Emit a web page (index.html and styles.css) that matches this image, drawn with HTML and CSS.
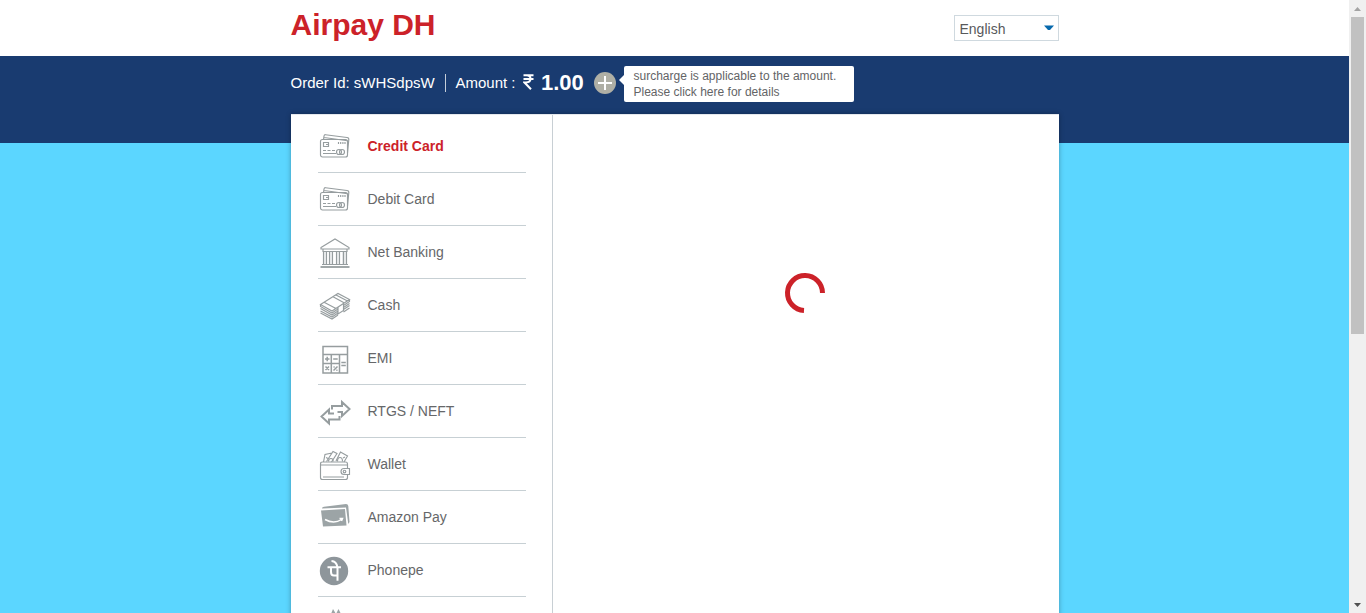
FILE: index.html
```html
<!DOCTYPE html>
<html lang="en">
<head>
<meta charset="utf-8">
<title>Airpay DH</title>
<link rel="stylesheet" href="styles.css">
</head>
<body>
<svg width="0" height="0" class="defs">
  <symbol id="cards" viewBox="0 0 32 32">
    <path d="M4.500 8.500L5 5Q5.300 3.600 6.500 3.700L28 6.500Q30 6.800 29.800 8.500L28.500 22M5 6.500L28.500 9.700"/>
    <rect x="1.500" y="8.500" width="27" height="17.500" rx="2"/>
    <path d="M4.500 11.500h5v4h-5zM7 13.500h2.500M19.500 11v2M21.700 11v2M23.900 11v2M26 11v2M4 19.500h3M8.500 19.500h3M13 19.500h3M4 22.500h13"/>
    <circle cx="20" cy="21" r="2.500"/><circle cx="23" cy="21" r="2.500"/>
  </symbol>
</svg>
<div class="window">
  <div class="page">
    <header class="top">
      <h1 class="brand">Airpay DH</h1>
      <div class="language">English<svg class="caret" width="10" height="6" viewBox="0 0 10 6"><path d="M0 0.500h10L6 5H4z"/></svg></div>
    </header>
    <main class="main">
      <div class="order">
        <span class="order-id">Order Id: sWHSdpsW</span>
        <span class="amount-label">Amount :</span>
        <svg class="rupee" width="11" height="16" viewBox="0 0 11 16"><path d="M0.500 1.200h10M0.500 5h10M1.500 1.200h2Q7.500 1.200 7.500 4.700T3 8.500H1.500L8 15.200"/></svg>
        <strong class="amount">1.00</strong>
        <svg class="plus" width="22" height="22" viewBox="0 0 22 22"><circle cx="11" cy="11" r="11"/><path d="M11 4v14M4 11h14"/></svg>
        <div class="tip">surcharge is applicable to the amount.<br>Please click here for details</div>
      </div>
      <section class="panel">
        <nav class="methods">
          <a class="method active"><svg class="icon"><use href="#cards"/></svg>Credit Card</a>
          <a class="method"><svg class="icon"><use href="#cards"/></svg>Debit Card</a>
          <a class="method"><svg class="icon" viewBox="0 0 32 32"><path class="soft" d="M4 14h4v13H4zM10 14h4v13h-4zM17 14h4v13h-4zM23 14h4v13h-4z"/><path d="M2 10.500L16 2L30 10.500v1.500H2zM4 12v2.500h24v-2.500M4.500 15v12M7.500 15v12M10.500 15v12M13.500 15v12M17.500 15v12M20.500 15v12M24.500 15v12M27.500 15v12M3 27.500h26"/><path class="base" d="M1.500 30h29"/></svg>Net Banking</a>
          <a class="method"><svg class="icon" viewBox="0 0 32 32"><path d="M1.500 14.500L19 3.500L30.500 9.500L13 21zM5.500 12.500L17 18.500M14 6.800L25.500 13M17 5L28.500 11M1.500 14.500v2L13 23l6-4M1.500 18.500L13 25l6-4M1.500 21L13 27l6-4M1.500 23L13 29l6-4M30.500 9.500v2L24.500 15.500M30.500 13.500L24.500 17.500M30.500 15.500L24.500 19.500M30.500 18L24.500 22M19 17.500v6.500L24.500 20.500v-7.500"/></svg>Cash</a>
          <a class="method"><svg class="icon thick" viewBox="0 0 32 32"><path d="M4 3.500h24.500v26.500H4zM4 11.500h24.500M4 20.500h16.500M12.300 11.500v18.500M20.500 11.500v18.500M6 16h4.500M8.200 13.800v4.400M14.200 16h4.500M22.300 19.500h4.500M22.300 22.500h4.500M6.500 23.500l3.500 3.500M10 23.500l-3.500 3.500M14.500 27.500l4-4M14.500 24h1.200M17.300 27.300h1.200"/></svg>EMI</a>
          <a class="method"><svg class="icon arrows" viewBox="0 0 32 32"><path d="M13 13.500v-3.500H23V6L30.500 13L23 20v-4h-4.500M20.500 20v3.500H10v4L2.500 20.500L10 13.500v4h5"/></svg>RTGS / NEFT</a>
          <a class="method"><svg class="icon" viewBox="0 0 32 32"><path d="M4.500 13L6 5.500l7-1.500M7.500 12.500L14 2.500l4 2L12.500 13M17 12L21.500 3l7 4-3.500 6M7 8.500l2 1M26 8l-2 1"/><path d="M9.500 12.500q0-3 2.500-3t2 3M18.500 12.500q0-4 2.500-4t2.500 4"/><path d="M28.500 19.500v-4.500q0-2-2-2H3.500Q1.500 13 1.500 15v13.500q0 2 2 2h23q2 0 2-2V25.500M2 16h26M4 28h21M30.500 19.500H25q-3 0-3 3t3 3h5.500z"/><circle cx="25.500" cy="22.500" r="1.300"/></svg>Wallet</a>
          <a class="method"><svg class="icon" viewBox="0 0 32 32"><path class="fill" d="M2 8.500L26 7l1.500 16.500L4 24.500zM3 6.500Q3 5 5 4.700L27 2q2 0 2.300 2L30.500 20l-1.200 2L27 5.500z"/><path class="smile" d="M6 17.500q9 5 16.500 0M20.500 16.500h3l-1 2.500"/></svg>Amazon Pay</a>
          <a class="method"><svg class="icon" viewBox="0 0 32 32"><circle class="dark" cx="15" cy="16" r="14.200"/><path class="pe" d="M8.500 12.300h13.500M12 12.300v4.700q0 3.500 3 3.500h3.200M18.500 12.300v13.500M12.500 6q5 .3 6 6.300"/></svg>Phonepe</a>
          <a class="method"><svg class="icon" viewBox="0 0 32 32"><path class="fill" d="M12 6l2-5l3 5l2.500-5l2.500 5v8H12z"/></svg></a>
        </nav>
        <div class="content">
          <svg class="spinner" width="42" height="42" viewBox="0 0 42 42"><path d="M20 38.500A17.500 17.500 0 1 1 38.500 21"/></svg>
        </div>
      </section>
    </main>
  </div>
  <aside class="scrollbar">
    <svg class="arrow up" width="7" height="4" viewBox="0 0 7 4"><path d="M0 4L3.500 0L7 4z"/></svg>
    <div class="thumb"></div>
    <svg class="arrow" width="7" height="4" viewBox="0 0 7 4"><path d="M0 0L3.500 4L7 0z"/></svg>
  </aside>
</div>
</body>
</html>
```
FILE: styles.css
```css
* { box-sizing: border-box; }
body { margin: 0; overflow: hidden; font-family: "Liberation Sans", Arial, sans-serif; font-size: 14px; color: #58595b; }
svg { fill: none; flex: none; }
.defs { display: block; height: 0; }
.window { display: flex; height: 613px; overflow: hidden; }
.page { flex: 1; display: flex; flex-direction: column; overflow: hidden; }
.top { flex: none; height: 56px; width: 768.500px; margin-left: 290.500px; display: flex; justify-content: space-between; align-items: flex-start; }
.brand { margin: 7px 0 0; font-size: 30px; line-height: 36px; color: #cc2229; }
.language { display: flex; align-items: center; justify-content: space-between; width: 105px; height: 26px; margin-top: 15px; padding: 2px 4px 0 4.500px; border: 1px solid #cfd9df; }
.caret { fill: #0769ad; margin-top: -3px; }
.main { flex: 1; min-height: 0; background: linear-gradient(#193b70 87px, #5bd6ff 87px); padding-left: 291px; }
.order { height: 58px; margin-left: -.5px; padding-top: 10px; display: flex; align-items: flex-start; color: #fff; font-size: 15px; line-height: 34px; }
.order-id { width: 155.500px; height: 18px; margin-top: 8px; line-height: 18px; border-right: 1px solid #c5ced9; }
.amount-label { margin-left: 9.500px; width: 67.500px; }
.rupee { margin-top: 8px; stroke: #fff; stroke-width: 2; }
.amount { margin-left: 7px; width: 53px; font-size: 22px; line-height: 33px; }
.plus { margin-top: 6px; margin-right: 8px; fill: #afafa5; }
.plus path { stroke: #fff; stroke-width: 2; }
.tip { position: relative; width: 230px; height: 36px; padding: 2px 9.500px; background: #fff; border-radius: 2px; color: #636466; font-size: 12px; line-height: 16px; }
.tip::before { content: ""; position: absolute; left: -5px; top: 9px; border: 5px solid transparent; border-left: 0; border-right-color: #fff; }
.panel { display: flex; width: 768px; height: 540px; background: #fff; border-top: 1px solid #e5e8ed; box-shadow: 0 0 5px rgba(0,0,0,.3); }
.methods { width: 262px; padding: 5px 26px 0 27px; border-right: 1px solid #c8cfd4; }
.method { display: flex; align-items: center; height: 53px; border-bottom: 1px solid #c7d0d4; color: #666769; }
.method.active { color: #cc2229; font-weight: bold; }
.icon { width: 32px; height: 32px; margin: 1px 16.500px 0 1px; stroke: #969d9f; stroke-width: 1.150; }
.thick { stroke-width: 1.500; }
.base { stroke-width: 1.800; }
.soft { fill: #eceeef; stroke: none; }
.arrows { stroke-width: 2; }
.fill { fill: #9ca4a6; stroke: none; }
.dark { fill: #8e969b; stroke: none; }
.smile { stroke: #fff; stroke-width: 1.500; }
.pe { stroke: #fff; stroke-width: 2; }
.content { flex: 1; display: flex; justify-content: center; align-items: flex-start; padding: 157px 2px 0 0; }
.spinner { stroke: #cc2229; stroke-width: 5; }
.scrollbar { width: 17px; background: #f0f0f0; display: flex; flex-direction: column; align-items: center; padding: 7px 0 6px; }
.arrow { fill: #505050; }
.arrow.up { fill: #a3a3a3; }
.thumb { width: 13px; height: 317px; margin: 6px 0 auto; background: #c1c1c1; }
```
